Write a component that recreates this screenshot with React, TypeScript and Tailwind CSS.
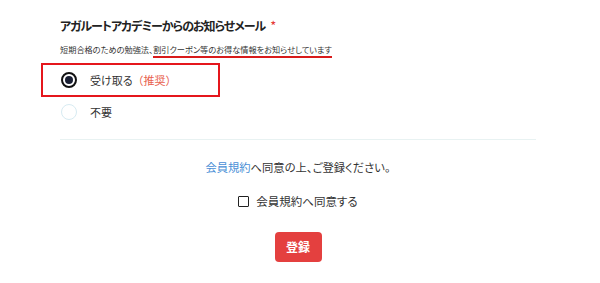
import React from "react";

export default function App() {
  return (
    <div
      className="w-[600px] h-[283px] bg-white overflow-hidden [font-feature-settings:'palt']"
      style={{ fontFamily: '"Noto Sans CJK JP", "Noto Sans", sans-serif' }}
    >
      <div className="ml-[60px] w-[476px] pt-[16px]">
        <div className="text-[12px] leading-[20px] font-bold text-[#222] tracking-[-1px]">
          アガルートアカデミーからのお知らせメール
          <span className="text-[#e53935] font-normal text-[13px] ml-[5px]">*</span>
        </div>
        <div className="mt-[6px] text-[8.2px] leading-[14px] text-[#333]">
          短期合格のための勉強法、
          <span className="border-b-2 border-[#d81b1b] pb-[1px]">割引クーポン等のお得な情報をお知らせしています</span>
        </div>
        <div className="mt-[7px] -ml-[19px] w-[179px] h-[34px] border-2 border-[#e5161c] flex items-center pl-[18px]">
          <span className="w-[16px] h-[16px] rounded-full border-[2.5px] border-[#111] flex items-center justify-center">
            <span className="w-[8px] h-[8px] rounded-full bg-[#1a1f33]" />
          </span>
          <span className="ml-[13px] text-[11px] text-[#333]">
            受け取る<span className="text-[#e8604c] [font-feature-settings:normal]">（推奨）</span>
          </span>
        </div>
        <div className="mt-[3px] h-[24px] flex items-center">
          <span className="ml-[1px] w-[16px] h-[16px] rounded-full border-[1.5px] border-[#d7ebf2]" />
          <span className="ml-[13px] text-[11px] text-[#333]">不要</span>
        </div>
        <div className="mt-[15px] h-px bg-[#e8f2f2]" />
        <div className="mt-[18px] text-center text-[11.3px] leading-[18px] text-[#333]">
          <span className="text-[#4a8fd6]">会員規約</span>へ同意の上、ご登録ください。
        </div>
        <div className="mt-[16px] flex items-center justify-center">
          <span className="w-[11px] h-[11px] border-[1.5px] border-[#222] rounded-[1px]" />
          <span className="ml-[7px] text-[11.5px] leading-[18px] text-[#333]">会員規約へ同意する</span>
        </div>
        <div className="mt-[22px] flex justify-center">
          <button className="w-[47px] h-[30px] rounded-[4px] bg-[#e4403f] text-white text-[12px] font-bold">
            登録
          </button>
        </div>
      </div>
    </div>
  );
}
